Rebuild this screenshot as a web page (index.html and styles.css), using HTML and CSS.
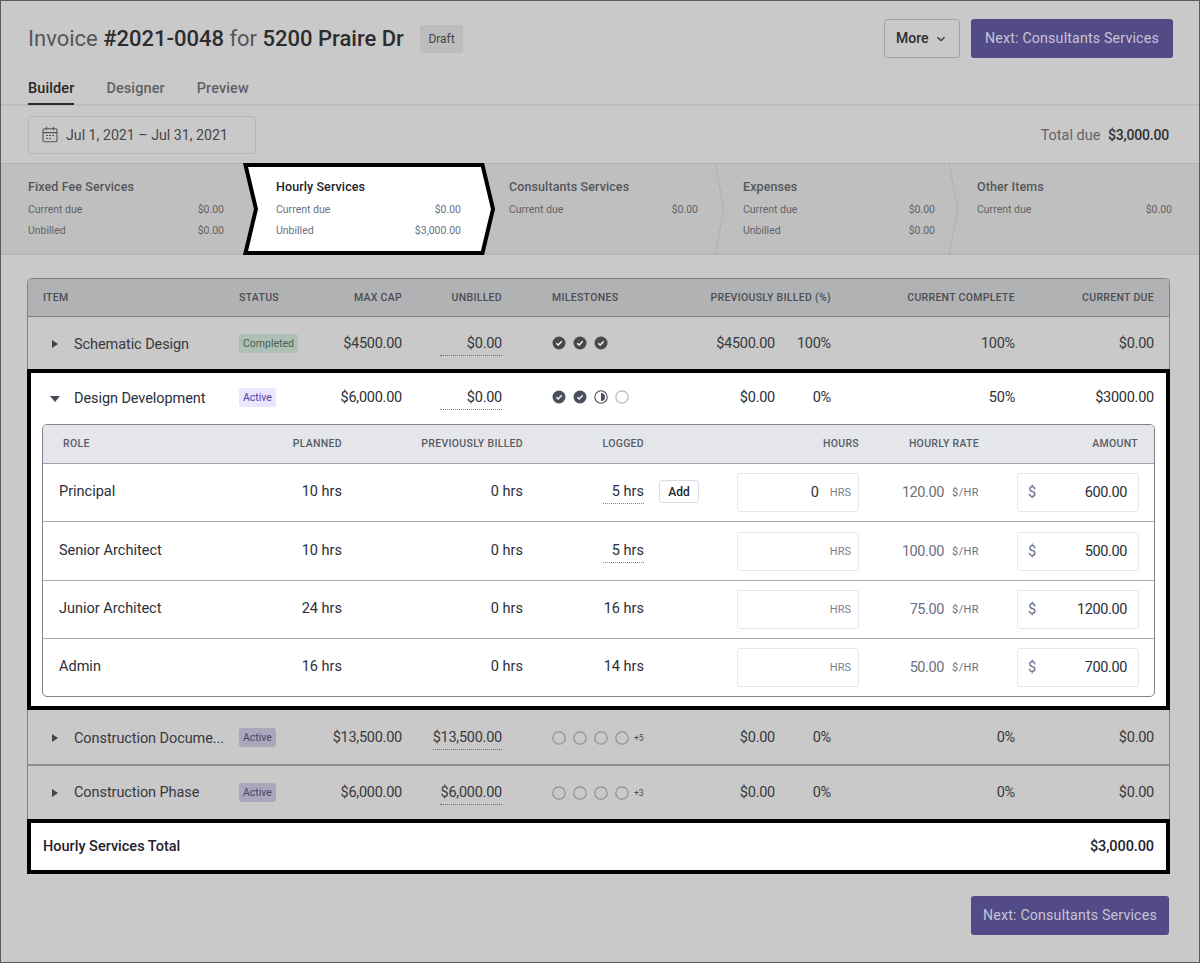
FILE: index.html
```html
<!DOCTYPE html>
<html lang="en">
<head>
<meta charset="utf-8">
<title>Invoice #2021-0048</title>
<link rel="stylesheet" href="styles.css">
</head>
<body>
<div class="page">
  <header class="top">
    <div class="title-row">
      <h1 class="title">Invoice <b>#2021-0048</b> for <b>5200 Praire Dr</b></h1>
      <span class="draft">Draft</span>
      <span class="spacer"></span>
      <button class="btn-more">More
        <svg class="more-caret" width="10" height="6" viewBox="0 0 10 6"><path d="M1.5 1.2 5 4.6l3.5-3.4" fill="none" stroke="#333" stroke-width="1.3"/></svg>
      </button>
      <button class="btn-next">Next: Consultants Services</button>
    </div>
    <nav class="tabs">
      <span class="tab tab-on">Builder</span>
      <span class="tab">Designer</span>
      <span class="tab">Preview</span>
    </nav>
  </header>

  <div class="date-row">
    <div class="date-box">
      <svg width="16" height="17" viewBox="0 0 16 17" fill="none" stroke="#555" stroke-width="1.1"><rect x="1" y="2.8" width="14" height="13" rx="1.5"/><path d="M1 6.6h14M4.5 .8v3.4M11.500 .8v3.400"/><path d="M4 9.500h2M7 9.500h2M10 9.500h2M4 12.500h2M7 12.500h2" stroke-width="1.200"/></svg>
      <span>Jul 1, 2021 – Jul 31, 2021</span>
    </div>
    <div class="total-due">Total due <b>$3,000.00</b></div>
  </div>

  <section class="strip">
    <div class="step s1">
      <div class="step-title">Fixed Fee Services</div>
      <div class="step-line"><span>Current due</span><span>$0.00</span></div>
      <div class="step-line"><span>Unbilled</span><span>$0.00</span></div>
    </div>
    <div class="step s2 step-on">
      <svg class="active-shape" width="252" height="92" viewBox="0 0 252 92"><path d="M2.500 2H239.500L250 46 239.500 90H2.500L13 46Z" fill="#fff" stroke="#000" stroke-width="4"/></svg>
      <div class="step-title">Hourly Services</div>
      <div class="step-line"><span>Current due</span><span>$0.00</span></div>
      <div class="step-line"><span>Unbilled</span><span>$3,000.00</span></div>
    </div>
    <div class="step s3">
      <div class="step-title">Consultants Services</div>
      <div class="step-line"><span>Current due</span><span>$0.00</span></div>
    </div>
    <div class="step s4">
      <svg class="sep" width="12" height="90" viewBox="0 0 12 90"><path d="M1 0 10 45 1 90" fill="none" stroke="#b0b0b0"/></svg>
      <div class="step-title">Expenses</div>
      <div class="step-line"><span>Current due</span><span>$0.00</span></div>
      <div class="step-line"><span>Unbilled</span><span>$0.00</span></div>
    </div>
    <div class="step s5">
      <svg class="sep" width="12" height="90" viewBox="0 0 12 90"><path d="M1 0 10 45 1 90" fill="none" stroke="#b0b0b0"/></svg>
      <div class="step-title">Other Items</div>
      <div class="step-line"><span>Current due</span><span>$0.00</span></div>
    </div>
  </section>

  <main class="card">
    <div class="grid head">
      <span>ITEM</span><span>STATUS</span><span class="r">MAX CAP</span><span class="r">UNBILLED</span>
      <span class="ms-col">MILESTONES</span><span class="r span2">PREVIOUSLY BILLED (%)</span>
      <span class="r">CURRENT COMPLETE</span><span class="r">CURRENT DUE</span>
    </div>

    <div class="grid row dim row-1">
      <span class="name"><svg class="tri" width="6" height="8" viewBox="0 0 6 8"><path d="M0 0 6 4 0 8Z"/></svg><span class="ell">Schematic Design</span></span>
      <span><span class="badge b-green">Completed</span></span>
      <span class="r">$4500.00</span>
      <span class="r"><span class="dot-u">$0.00</span></span>
      <span class="ms-col ms">
        <svg class="m" viewBox="0 0 14 14"><use href="#done"/></svg><svg class="m" viewBox="0 0 14 14"><use href="#done"/></svg><svg class="m" viewBox="0 0 14 14"><use href="#done"/></svg>
      </span>
      <span class="r">$4500.00</span><span class="r">100%</span><span class="r">100%</span><span class="r">$0.00</span>
    </div>

    <section class="open">
      <div class="grid row row-open">
        <span class="name"><svg class="tri-d" width="10" height="6" viewBox="0 0 10 6"><path d="M0 0H10L5 6Z"/></svg><span class="ell">Design Development</span></span>
        <span><span class="badge b-active">Active</span></span>
        <span class="r">$6,000.00</span>
        <span class="r"><span class="dot-u">$0.00</span></span>
        <span class="ms-col ms">
          <svg class="m" viewBox="0 0 14 14"><use href="#done"/></svg><svg class="m" viewBox="0 0 14 14"><use href="#done"/></svg><svg class="m" viewBox="0 0 14 14"><use href="#half"/></svg><svg class="m" viewBox="0 0 14 14"><use href="#none"/></svg>
        </span>
        <span class="r">$0.00</span><span class="r">0%</span><span class="r">50%</span><span class="r">$3000.00</span>
      </div>

      <div class="inner">
        <div class="igrid ihead">
          <span class="role-h">ROLE</span><span class="r">PLANNED</span><span class="r">PREVIOUSLY BILLED</span><span class="r">LOGGED</span><span></span>
          <span class="r">HOURS</span><span class="r">HOURLY RATE</span><span class="r amt-h">AMOUNT</span>
        </div>
        <div class="igrid irow">
          <span>Principal</span><span class="r">10 hrs</span><span class="r">0 hrs</span>
          <span class="r"><span class="dot-u">5 hrs</span></span><span><button class="add">Add</button></span>
          <div class="field"><span class="val">0</span><span class="unit">HRS</span></div>
          <span class="rate"><span>120.00</span><small>$/HR</small></span>
          <div class="field money"><span class="cur">$</span><span class="val">600.00</span></div>
        </div>
        <div class="igrid irow irow-tall">
          <span>Senior Architect</span><span class="r">10 hrs</span><span class="r">0 hrs</span>
          <span class="r"><span class="dot-u">5 hrs</span></span><span></span>
          <div class="field"><span class="unit">HRS</span></div>
          <span class="rate"><span>100.00</span><small>$/HR</small></span>
          <div class="field money"><span class="cur">$</span><span class="val">500.00</span></div>
        </div>
        <div class="igrid irow">
          <span>Junior Architect</span><span class="r">24 hrs</span><span class="r">0 hrs</span>
          <span class="r">16 hrs</span><span></span>
          <div class="field"><span class="unit">HRS</span></div>
          <span class="rate"><span>75.00</span><small>$/HR</small></span>
          <div class="field money"><span class="cur">$</span><span class="val">1200.00</span></div>
        </div>
        <div class="igrid irow">
          <span>Admin</span><span class="r">16 hrs</span><span class="r">0 hrs</span>
          <span class="r">14 hrs</span><span></span>
          <div class="field"><span class="unit">HRS</span></div>
          <span class="rate"><span>50.00</span><small>$/HR</small></span>
          <div class="field money"><span class="cur">$</span><span class="val">700.00</span></div>
        </div>
      </div>
    </section>

    <div class="grid row dim row-3">
      <span class="name"><svg class="tri" width="6" height="8" viewBox="0 0 6 8"><path d="M0 0 6 4 0 8Z"/></svg><span class="ell">Construction Docume...</span></span>
      <span><span class="badge b-dim">Active</span></span>
      <span class="r">$13,500.00</span>
      <span class="r"><span class="dot-u">$13,500.00</span></span>
      <span class="ms-col ms">
        <svg class="m" viewBox="0 0 14 14"><use href="#none"/></svg><svg class="m" viewBox="0 0 14 14"><use href="#none"/></svg><svg class="m" viewBox="0 0 14 14"><use href="#none"/></svg><svg class="m" viewBox="0 0 14 14"><use href="#none"/></svg><small class="more-ms">+5</small>
      </span>
      <span class="r">$0.00</span><span class="r">0%</span><span class="r">0%</span><span class="r">$0.00</span>
    </div>
    <div class="grid row dim row-4">
      <span class="name"><svg class="tri" width="6" height="8" viewBox="0 0 6 8"><path d="M0 0 6 4 0 8Z"/></svg><span class="ell">Construction Phase</span></span>
      <span><span class="badge b-dim">Active</span></span>
      <span class="r">$6,000.00</span>
      <span class="r"><span class="dot-u">$6,000.00</span></span>
      <span class="ms-col ms">
        <svg class="m" viewBox="0 0 14 14"><use href="#none"/></svg><svg class="m" viewBox="0 0 14 14"><use href="#none"/></svg><svg class="m" viewBox="0 0 14 14"><use href="#none"/></svg><svg class="m" viewBox="0 0 14 14"><use href="#none"/></svg><small class="more-ms">+3</small>
      </span>
      <span class="r">$0.00</span><span class="r">0%</span><span class="r">0%</span><span class="r">$0.00</span>
    </div>

    <div class="total"><span>Hourly Services Total</span><span class="total-val">$3,000.00</span></div>
  </main>

  <div class="foot"><button class="btn-next">Next: Consultants Services</button></div>
</div>

<svg class="defs" width="0" height="0">
  <symbol id="done" viewBox="0 0 14 14"><circle cx="7" cy="7" r="6.500" fill="var(--m, #4a4f5c)"/><path d="M4.300 7.300 6.200 9 9.700 5.200" fill="none" stroke="#fff" stroke-width="1.300"/></symbol>
  <symbol id="half" viewBox="0 0 14 14"><circle cx="7" cy="7" r="6.200" fill="#fff" stroke="#4a4f5c" stroke-width="1.100"/><path d="M7 3a4 4 0 0 1 0 8Z" fill="#4a4f5c"/></symbol>
  <symbol id="none" viewBox="0 0 14 14"><circle cx="7" cy="7" r="6.200" fill="none" stroke="var(--e, #b4b7c0)" stroke-width="1.200"/></symbol>
</svg>
</body>
</html>
```
FILE: styles.css
```css
* { box-sizing: border-box; }
html, body { margin: 0; padding: 0; }
body { font-family: Roboto, "Liberation Sans", sans-serif; color: #38383c; }
button { font: inherit; cursor: pointer; }
.defs { position: absolute; }

.page {
  width: 1200px; height: 963px;
  border: 1px solid #5c5c5c;
  background: #c9c9c9;
  overflow: hidden;
}

/* top header */
.top { padding: 18px 26px 0 27px; height: 105px; border-bottom: 2px solid #bdbdbd; }
.title-row { display: flex; align-items: center; height: 39px; }
.title { margin: 0; font-size: 22px; font-weight: 400; color: #55565a; letter-spacing: 0; }
.title b { font-weight: 500; color: #2c2c30; }
.draft {
  margin-left: 16px; padding: 0 8.500px; height: 28px; line-height: 28px;
  background: #bcbcbc; border-radius: 3px; font-size: 12px; color: #47474b;
}
.spacer { flex: 1; }
.btn-more {
  display: flex; align-items: center; gap: 7px;
  width: 76px; height: 39px; padding: 0 0 1px 11px; margin-right: 11px;
  background: #c9c9c9; border: 1px solid #a4a4a4; border-radius: 3px;
  font-size: 14px; font-weight: 500; color: #2c2c30;
}
.btn-next {
  height: 39px; width: 202px; padding: 0 0 2px;
  background: #534b87; border: 0; border-radius: 3px;
  font-size: 14.200px; color: #c6c4d6; letter-spacing: .18px;
}
.more-caret { display: block; margin-top: 1px; }

.tabs { display: flex; gap: 32px; margin-top: 21px; }
.tab { height: 26px; line-height: 20px; font-size: 14.500px; font-weight: 500; color: #606165; letter-spacing: .1px; }
.tab-on { color: #27272b; border-bottom: 2px solid #2a2a30; }

/* date row */
.date-row {
  height: 57px; padding: 0 30px 0 27px;
  display: flex; align-items: center; justify-content: space-between;
}
.date-box {
  width: 228px; height: 38px; padding-left: 13px;
  display: flex; align-items: center; gap: 8px;
  border: 1px solid #b7b7b7; border-radius: 3px;
  font-size: 14.200px; color: #46464a;
}
.total-due { padding-top: 1px; font-size: 14.500px; color: #636367; }
.total-due b { margin-left: 4px; font-size: 14px; font-weight: 500; letter-spacing: -.2px; color: #303034; }

/* steps */
.strip {
  height: 92px; padding: 0 27px;
  display: grid; grid-template-columns: 248px 233px 234px 234px 195px;
  background: #bfbfbf;
  border-top: 1px solid #b2b2b2; border-bottom: 2px solid #b6b6b6;
}
.step { position: relative; padding-top: 15px; }
.s1 { padding-right: 52px; }
.s2 { padding-right: 48px; }
.s3 { padding-right: 45px; }
.s4 { padding-right: 42px; }
.step-title { position: relative; font-size: 12.500px; line-height: 16px; font-weight: 500; color: #55565a; margin-bottom: 8px; letter-spacing: .1px; }
.step-line {
  position: relative; display: flex; justify-content: space-between;
  font-size: 10.500px; line-height: 14px; color: #616268; margin-bottom: 7px;
}
.step-on .step-title { color: #22242c; }
.step-on .step-line { color: #6b7080; }
.active-shape { position: absolute; left: -33px; top: -1px; }
.sep { position: absolute; left: -29px; top: 0; }

/* main card */
.card {
  width: 1143px; margin: 23px 0 0 26px;
  border: 1px solid #808185; border-bottom: 0; border-radius: 5px 5px 0 0;
}
.grid {
  display: grid; align-items: center;
  grid-template-columns: 196px 80px 83px 100px 198px 75px 56px 184px 139px;
  padding: 0 15px;
}
.r { text-align: right; }
.ms-col { padding-left: 50px; }
.span2 { grid-column: span 2; }
.head {
  height: 38px; background: #b1b2b4; border-bottom: 1px solid #7f8084; border-radius: 4px 4px 0 0;
  font-size: 10.500px; font-weight: 500; letter-spacing: .3px; color: #4c4d52;
}
.row { font-size: 14.500px; }
.row .r { letter-spacing: -.25px; }
.dim { color: #38393d; }
.row-1 { height: 52px; }
.row-3 { height: 56px; border-bottom: 2px solid #8f8f90; }
.row-4 { height: 53px; }
.row-3 .ms { margin-top: 2px; }
.name { display: flex; align-items: center; margin-top: 2px; color: #38393d; }
.row-4 .name { margin-top: 0; }
.tri { margin: 0 16px 0 9px; flex: none; fill: #444549; }
.tri-d { margin: 0 14px 0 7px; flex: none; fill: #454a58; }
.ell { white-space: nowrap; letter-spacing: -.08px; }
.badge {
  display: inline-block; padding: 0 4px; height: 19px; line-height: 19px;
  border-radius: 3px; font-size: 10.500px;
}
.b-green { background: #aebfb5; color: #4a5e52; }
.b-active { background: #ebe6fd; color: #4d3fa8; }
.b-dim { background: #a9a7b9; color: #45456a; }
.dot-u {
  display: inline-block; min-width: 62px; padding-bottom: 3px; margin-bottom: -4px;
  border-bottom: 1px dotted #6b6b78; text-align: right;
}
.row-open .dot-u, .irow .dot-u { border-bottom-color: #8878d8; }
.irow .dot-u { min-width: 41px; }
.ms { display: flex; align-items: center; gap: 7px; }
.m { width: 14px; height: 14px; display: block; }
.dim .m { --m: #48494d; --e: #8f9094; }
.more-ms { font-size: 8.500px; margin-left: -2px; color: #4a4a4e; }

/* highlighted open row */
.open {
  margin: 0 0 0 -1px; width: 1143px;
  background: #fff; border: 4px solid #000; color: #2b2f3a;
  padding: 0 11px 9px 11px;
}
.open .name { color: #2b2f3a; }
.open .grid { margin: 0 -11px; padding: 0 15px 2px 12px; height: 51px; }
.row-open .ms { margin-top: -1px; }
.inner { border: 1px solid #7f838f; border-radius: 5px; overflow: hidden; }
.igrid {
  display: grid; align-items: center;
  grid-template-columns: 183px 100px 181px 121px 93px 122px 120px 160px;
  padding: 0 15px 0 16px;
}
.ihead {
  height: 39px; padding-bottom: 1px; background: #e4e6ea; border-bottom: 1px solid #a2a5ad;
  font-size: 10.500px; font-weight: 500; letter-spacing: .3px; color: #585c68;
}
.role-h { padding-left: 4px; }
.irow { height: 58px; padding-bottom: 2px; font-size: 14.500px; border-bottom: 1px solid #a8abb3; }
.irow-tall { height: 59px; }
.irow:last-child { height: 57px; border-bottom: 0; }
.add {
  margin-left: 15px; width: 40px; height: 23px; padding: 0;
  background: #fff; border: 1px solid #dcdee3; border-radius: 3px;
  font-size: 12px; font-weight: 500; color: #23262e;
}
.field {
  height: 39px; margin-top: 2px; padding: 0 7px 0 10px;
  display: flex; align-items: center; justify-content: flex-end;
  border: 1px solid #e6e7ea; border-radius: 3px; background: #fff;
}
.field .unit { font-size: 11px; color: #7d818d; margin-left: 11px; }
.money { justify-content: space-between; margin-left: 38px; padding-right: 11px; }
.money .val { letter-spacing: -.4px; }
.cur { color: #6c717e; }
.rate { display: flex; justify-content: flex-end; align-items: center; gap: 8px; margin-top: 2px; color: #6c717e; }
.rate span { letter-spacing: -.4px; }
.rate small { font-size: 11px; letter-spacing: .4px; }
.amt-h { padding-right: 1px; }

/* total */
.total {
  margin-left: -1px; width: 1143px; height: 55px; padding: 0 12px;
  background: #fff; border: 4px solid #000;
  display: flex; align-items: center; justify-content: space-between;
  font-size: 14.500px; font-weight: 500; color: #1f222c;
}
.total-val { letter-spacing: -.1px; }

.foot { padding: 22px 30px 0 0; display: flex; justify-content: flex-end; }
.foot .btn-next { width: 198px; }
```
